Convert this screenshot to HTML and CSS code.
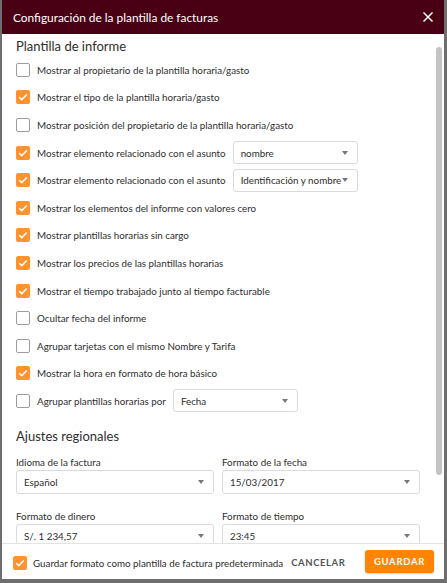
FILE: index.html
```html
<!DOCTYPE html>
<html lang="es">
<head>
<meta charset="utf-8">
<link rel="stylesheet" href="styles.css">
</head>
<body>
<div class="modal">
  <div class="header">
    <span class="title">Configuración de la plantilla de facturas</span>
    <svg class="close" width="10" height="10" viewBox="0 0 10 10"><path d="M1 1L9 9M9 1L1 9" stroke="#fff" stroke-width="1.5" stroke-linecap="square"/></svg>
  </div>
  <div class="content">
    <div class="scroll-thumb"></div>
    <h2 class="section">Plantilla de informe</h2>
    <div class="row"><span class="cb"></span><span class="label">Mostrar al propietario de la plantilla horaria/gasto</span></div>
    <div class="row"><span class="cb on"><svg viewBox="0 0 14 14"><path d="M3.2 7.2L5.8 9.6L10.8 4.4" fill="none" stroke="#fff" stroke-width="1.5"/></svg></span><span class="label">Mostrar el tipo de la plantilla horaria/gasto</span></div>
    <div class="row"><span class="cb"></span><span class="label">Mostrar posición del propietario de la plantilla horaria/gasto</span></div>
    <div class="row"><span class="cb on"><svg viewBox="0 0 14 14"><path d="M3.2 7.2L5.8 9.6L10.8 4.4" fill="none" stroke="#fff" stroke-width="1.5"/></svg></span><span class="label">Mostrar elemento relacionado con el asunto</span><span class="select small"><span class="val">nombre</span><span class="arrow"></span></span></div>
    <div class="row"><span class="cb on"><svg viewBox="0 0 14 14"><path d="M3.2 7.2L5.8 9.6L10.8 4.4" fill="none" stroke="#fff" stroke-width="1.5"/></svg></span><span class="label">Mostrar elemento relacionado con el asunto</span><span class="select small"><span class="val">Identificación y nombre</span><span class="arrow"></span></span></div>
    <div class="row"><span class="cb on"><svg viewBox="0 0 14 14"><path d="M3.2 7.2L5.8 9.6L10.8 4.4" fill="none" stroke="#fff" stroke-width="1.5"/></svg></span><span class="label">Mostrar los elementos del informe con valores cero</span></div>
    <div class="row"><span class="cb on"><svg viewBox="0 0 14 14"><path d="M3.2 7.2L5.8 9.6L10.8 4.4" fill="none" stroke="#fff" stroke-width="1.5"/></svg></span><span class="label">Mostrar plantillas horarias sin cargo</span></div>
    <div class="row"><span class="cb on"><svg viewBox="0 0 14 14"><path d="M3.2 7.2L5.8 9.6L10.8 4.4" fill="none" stroke="#fff" stroke-width="1.5"/></svg></span><span class="label">Mostrar los precios de las plantillas horarias</span></div>
    <div class="row"><span class="cb on"><svg viewBox="0 0 14 14"><path d="M3.2 7.2L5.8 9.6L10.8 4.4" fill="none" stroke="#fff" stroke-width="1.5"/></svg></span><span class="label">Mostrar el tiempo trabajado junto al tiempo facturable</span></div>
    <div class="row"><span class="cb"></span><span class="label">Ocultar fecha del informe</span></div>
    <div class="row"><span class="cb"></span><span class="label">Agrupar tarjetas con el mismo Nombre y Tarifa</span></div>
    <div class="row"><span class="cb on"><svg viewBox="0 0 14 14"><path d="M3.2 7.2L5.8 9.6L10.8 4.4" fill="none" stroke="#fff" stroke-width="1.5"/></svg></span><span class="label">Mostrar la hora en formato de hora básico</span></div>
    <div class="row"><span class="cb"></span><span class="label">Agrupar plantillas horarias por</span><span class="select small"><span class="val">Fecha</span><span class="arrow"></span></span></div>

    <h2 class="section second">Ajustes regionales</h2>
    <div class="grid">
      <div class="field">
        <div class="flabel">Idioma de la factura</div>
        <div class="select wide"><span class="val">Español</span><span class="arrow"></span></div>
      </div>
      <div class="field">
        <div class="flabel">Formato de la fecha</div>
        <div class="select wide"><span class="val">15/03/2017</span><span class="arrow"></span></div>
      </div>
      <div class="field">
        <div class="flabel">Formato de dinero</div>
        <div class="select wide"><span class="val">S/. 1 234,57</span><span class="arrow"></span></div>
      </div>
      <div class="field">
        <div class="flabel">Formato de tiempo</div>
        <div class="select wide"><span class="val">23:45</span><span class="arrow"></span></div>
      </div>
    </div>
  </div>
  <div class="footer">
    <span class="cb on"><svg viewBox="0 0 14 14"><path d="M3.2 7.2L5.8 9.6L10.8 4.4" fill="none" stroke="#fff" stroke-width="1.5"/></svg></span>
    <span class="flabel-foot">Guardar formato como plantilla de factura predeterminada</span>
    <span class="cancel">CANCELAR</span>
    <span class="save">GUARDAR</span>
  </div>
</div>
</body>
</html>
```

FILE: styles.css
```css
html, body {
  margin: 0;
  padding: 0;
}
body {
  background: #6e6e6e;
  width: 447px;
  height: 583px;
  overflow: hidden;
  font-family: "Lato", "Open Sans", sans-serif;
  color: #2e2e2e;
}
.modal {
  margin-left: 2px;
  width: 442px;
  height: 579px;
  background: #fff;
  display: flex;
  flex-direction: column;
  overflow: hidden;
}
.header {
  height: 34px;
  flex: none;
  background: #4a0014;
  display: flex;
  align-items: center;
  padding: 0 11px 0 11px;
}
.title {
  color: #fff;
  font-size: 11.9px;
  flex: 1;
}
.close {
  width: 10px;
  height: 10px;
  margin-top: -1px;
}
.content {
  position: relative;
  flex: 1;
  overflow: hidden;
  padding: 3px 0 0 14px;
}
.scroll-thumb {
  position: absolute;
  left: 434px;
  top: 13px;
  width: 6px;
  height: 428px;
  border-radius: 3px;
  background: #c4c4c4;
}
.section {
  margin: 0;
  font-size: 13px;
  font-weight: normal;
  line-height: 19px;
  height: 19px;
  color: #2e2e2e;
}
.section.second {
  margin-top: 12px;
}
.row {
  height: 27.6px;
  display: flex;
  align-items: center;
  font-size: 9.8px;
}
.cb {
  width: 14px;
  height: 14px;
  box-sizing: border-box;
  border: 1px solid #9c9c9c;
  border-radius: 2px;
  background: #fff;
  flex: none;
  display: flex;
}
.cb.on {
  background: #ff9330;
  border-color: #ff9330;
}
.cb svg {
  width: 14px;
  height: 14px;
  margin: -1px;
}
.label {
  margin-left: 7px;
  white-space: nowrap;
}
.select {
  box-sizing: border-box;
  border: 1px solid #dadada;
  border-radius: 3px;
  background: #fff;
  display: flex;
  align-items: center;
  position: relative;
  font-size: 9.8px;
  color: #2e2e2e;
  overflow: hidden;
}
.select .val {
  padding-left: 7px;
  white-space: nowrap;
  flex: 1;
}
.select .arrow {
  position: absolute;
  right: 9px;
  top: 50%;
  margin-top: -2px;
  width: 0;
  height: 0;
  border-left: 3.5px solid transparent;
  border-right: 3.5px solid transparent;
  border-top: 4px solid #777;
}
.select.small {
  width: 125px;
  height: 23px;
  margin-left: 7px;
}
.select.wide {
  width: 198px;
  height: 24px;
}
.grid {
  display: grid;
  grid-template-columns: 198px 198px;
  column-gap: 8px;
  row-gap: 15px;
  margin-top: 9px;
}
.flabel {
  font-size: 9.8px;
  line-height: 14px;
  margin-bottom: 1px;
}
.footer {
  flex: none;
  height: 36px;
  border-top: 1px solid #e3e3e3;
  display: flex;
  align-items: center;
  padding: 0 10px 0 11px;
  font-size: 9.8px;
  box-sizing: border-box;
}
.footer .cb {
  margin-top: 3px;
}
.flabel-foot {
  margin-left: 6px;
  margin-top: 3px;
  white-space: nowrap;
}
.cancel {
  margin-left: 8px;
  margin-top: 2px;
  color: #555;
  font-weight: 700;
  letter-spacing: 0.6px;
  font-size: 9.5px;
}
.save {
  margin-left: auto;
  background: #ff8400;
  color: #fff;
  font-weight: 700;
  font-size: 9.5px;
  letter-spacing: 0.7px;
  width: 69px;
  height: 23px;
  border-radius: 3px;
  display: flex;
  align-items: center;
  justify-content: center;
  box-shadow: 0 1px 2px rgba(0,0,0,0.2);
}
```
